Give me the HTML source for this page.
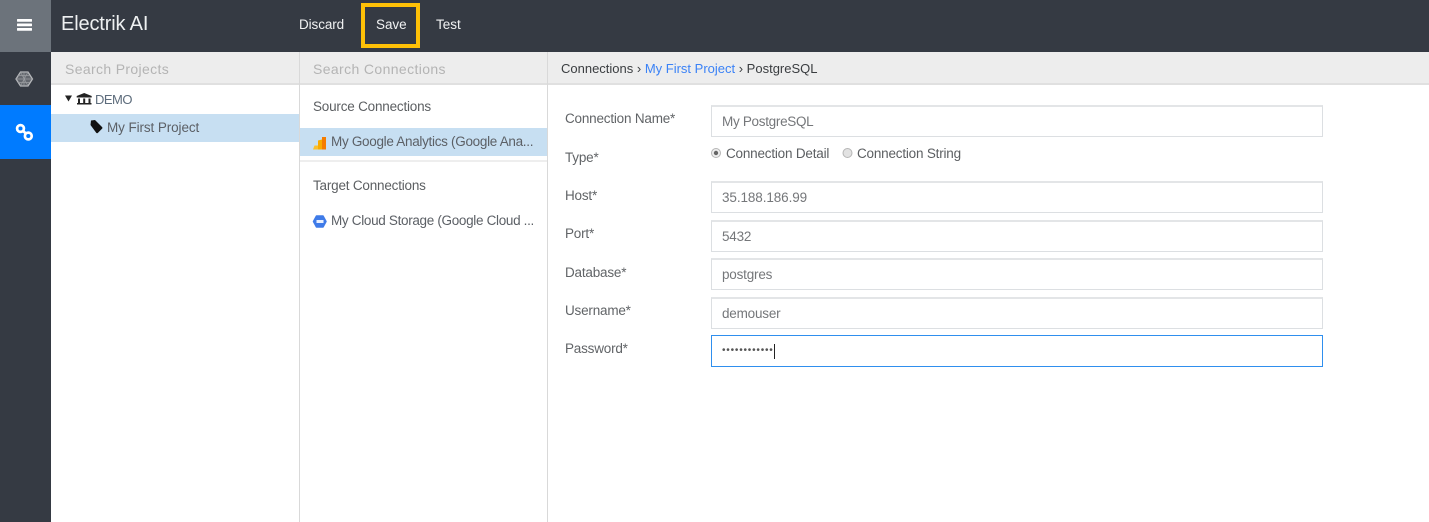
<!DOCTYPE html>
<html><head><meta charset="utf-8"><style>
html,body{margin:0;padding:0;width:1429px;height:522px;overflow:hidden;background:#fff}
body{position:relative;font-family:"Liberation Sans",sans-serif;font-size:13.5px;letter-spacing:-.2px;color:#555}
div{position:absolute;box-sizing:border-box}
.t{white-space:nowrap;line-height:18px;height:18px}
.inp{left:711px;width:612px;height:32px;border:1px solid #dcdfe2;border-top:2px solid #e3e5e7}
.iv{left:722px;color:#75777a}
.lb{left:565px;color:#616467}
</style></head><body>
<div style="left:0;top:0;width:1429px;height:52px;background:#353a43"></div>
<div style="left:0;top:0;width:51px;height:52px;background:#6c737b"></div>
<div style="left:0;top:52px;width:51px;height:470px;background:#353a43"></div>
<div style="left:0;top:105px;width:51px;height:54px;background:#007bff"></div>
<svg style="position:absolute;left:0;top:0" width="51" height="160">
<g fill="#fff"><rect x="17" y="19" width="15" height="2.700" rx=".6"/><rect x="17" y="23.500" width="15" height="2.700" rx=".6"/><rect x="17" y="28" width="15" height="2.700" rx=".6"/></g>
<path d="M20.500 72h7.500l4.500 7-4.500 7h-7.500l-4.500-7z" fill="#63676e" stroke="#b5b7ba" stroke-width="1.300"/>
<path d="M20.500 72l7.500 14M28 72l-7.500 14M16 79h16.500M18 75.500h12M18 82.500h12M24 72v14" fill="none" stroke="#9a9da1" stroke-width=".7"/>
<g fill="none" stroke="#fff" stroke-width="2.700"><circle cx="20.500" cy="128.500" r="3.400"/><circle cx="28.300" cy="136" r="3.400"/><path d="M22.500 130.500l4 3.500"/></g>
</svg>
<div class="t" style="left:61px;top:12px;height:24px;line-height:24px;font-size:20px;color:#eef0f1;letter-spacing:-.15px">Electrik AI</div>
<div class="t" style="left:299px;top:16px;color:#f1f2f3;letter-spacing:-.1px">Discard</div>
<div class="t" style="left:376px;top:16px;color:#f1f2f3;letter-spacing:-.05px">Save</div>
<div class="t" style="left:436px;top:16px;color:#f1f2f3;letter-spacing:0">Test</div>
<div style="left:361px;top:3px;width:59px;height:45px;border:4px solid #ffc107"></div>

<div style="left:51px;top:52px;width:1378px;height:33px;background:#ededed;border-bottom:2px solid #e0e0e0"></div>
<div style="left:299px;top:52px;width:1px;height:470px;background:#d9d9d9"></div>
<div style="left:547px;top:52px;width:1px;height:470px;background:#d9d9d9"></div>
<div class="t" style="left:65px;top:60px;font-size:14px;color:#b4b4b4;letter-spacing:.35px">Search Projects</div>
<div class="t" style="left:313px;top:60px;font-size:14px;color:#b4b4b4;letter-spacing:.38px">Search Connections</div>
<div class="t" style="left:561px;top:60px;font-size:13px;letter-spacing:0;color:#3a3d40">Connections › <span style="color:#3b82f6">My First Project</span> › PostgreSQL</div>

<div style="left:51px;top:114px;width:248px;height:28px;background:#c7dff2"></div>
<div style="left:300px;top:128px;width:247px;height:28px;background:#c7dff2"></div>
<div style="left:300px;top:160px;width:247px;height:2px;background:#eee"></div>
<svg style="position:absolute;left:60px;top:88px" width="60" height="50">
<path d="M5 7.500h7l-3.500 6z" fill="#222"/>
<path d="M24.200 5l7.500 3v1.500h-15v-1.500zM18 10.500h2v4.500h-2zM23.200 10.500h2v4.500h-2zM28.500 10.500h2v4.500h-2zM17 15h14.500v1.500h-14.500z" fill="#222"/>
<path d="M30.500 37l.5-4.500 4-.5 7 7c.6.600.6 1.200 0 1.800l-4 4c-.6.600-1.200.6-1.800 0z" fill="#111"/>
</svg>
<div class="t" style="left:95px;top:91px;font-size:13px;color:#5d6c7c;letter-spacing:-.5px">DEMO</div>
<div class="t" style="left:107px;top:119px;color:#5c6066;letter-spacing:-.1px">My First Project</div>

<div class="t" style="left:313px;top:98px;color:#5c5f62">Source Connections</div>
<div class="t" style="left:331px;top:133px;width:207px;overflow:hidden;color:#5c6066;letter-spacing:-.3px">My Google Analytics (Google Ana...</div>
<div class="t" style="left:313px;top:177px;color:#5c5f62">Target Connections</div>
<div class="t" style="left:331px;top:212px;width:207px;overflow:hidden;color:#5c6066;letter-spacing:-.32px">My Cloud Storage (Google Cloud ...</div>
<svg style="position:absolute;left:312px;top:135px" width="16" height="16"><path d="M1 14.500l1.500-4h3.500v4z" fill="#fbc02d"/><path d="M6 14.500v-9l4-1v10z" fill="#f9ab00"/><path d="M10 14.500v-12.500h4v12.500z" fill="#f57c00"/></svg>
<svg style="position:absolute;left:312px;top:214px" width="16" height="16"><path d="M4.500 2h6.500l3 5.500-3 5.500h-6.500l-3-5.500z" fill="#3f7be8" stroke="#3f7be8" stroke-width="1.500" stroke-linejoin="round"/><rect x="4.500" y="6" width="7" height="3" fill="#e8f0ff"/></svg>

<div class="t lb" style="top:110px">Connection Name*</div>
<div class="t lb" style="top:149px">Type*</div>
<div class="t lb" style="top:187px">Host*</div>
<div class="t lb" style="top:225px">Port*</div>
<div class="t lb" style="top:264px">Database*</div>
<div class="t lb" style="top:302px">Username*</div>
<div class="t lb" style="top:340px">Password*</div>

<div class="inp" style="top:105px"></div><div class="t iv" style="top:113px;letter-spacing:-.3px">My PostgreSQL</div>
<svg style="position:absolute;left:710px;top:146px" width="145" height="14"><circle cx="6" cy="7" r="4.500" fill="#eee" stroke="#b5b5b5"/><circle cx="6" cy="7" r="2.200" fill="#666"/><circle cx="137.500" cy="7" r="4.500" fill="#e2e2e2" stroke="#b5b5b5"/></svg>
<div class="t" style="left:726px;top:145px;color:#5c5f62">Connection Detail</div>
<div class="t" style="left:857px;top:145px;color:#5c5f62">Connection String</div>
<div class="inp" style="top:181px"></div><div class="t iv" style="top:189px;letter-spacing:-.1px">35.188.186.99</div>
<div class="inp" style="top:220px"></div><div class="t iv" style="top:228px">5432</div>
<div class="inp" style="top:258px"></div><div class="t iv" style="top:266px">postgres</div>
<div class="inp" style="top:297px"></div><div class="t iv" style="top:305px">demouser</div>
<div class="inp" style="top:335px;height:32px;border:1px solid #2f8fee"></div>
<div class="t" style="left:722px;top:342px;color:#555;font-size:10px;letter-spacing:.8px">••••••••••••</div>
<div style="left:774px;top:344px;width:1px;height:15px;background:#222"></div>
</body></html>
